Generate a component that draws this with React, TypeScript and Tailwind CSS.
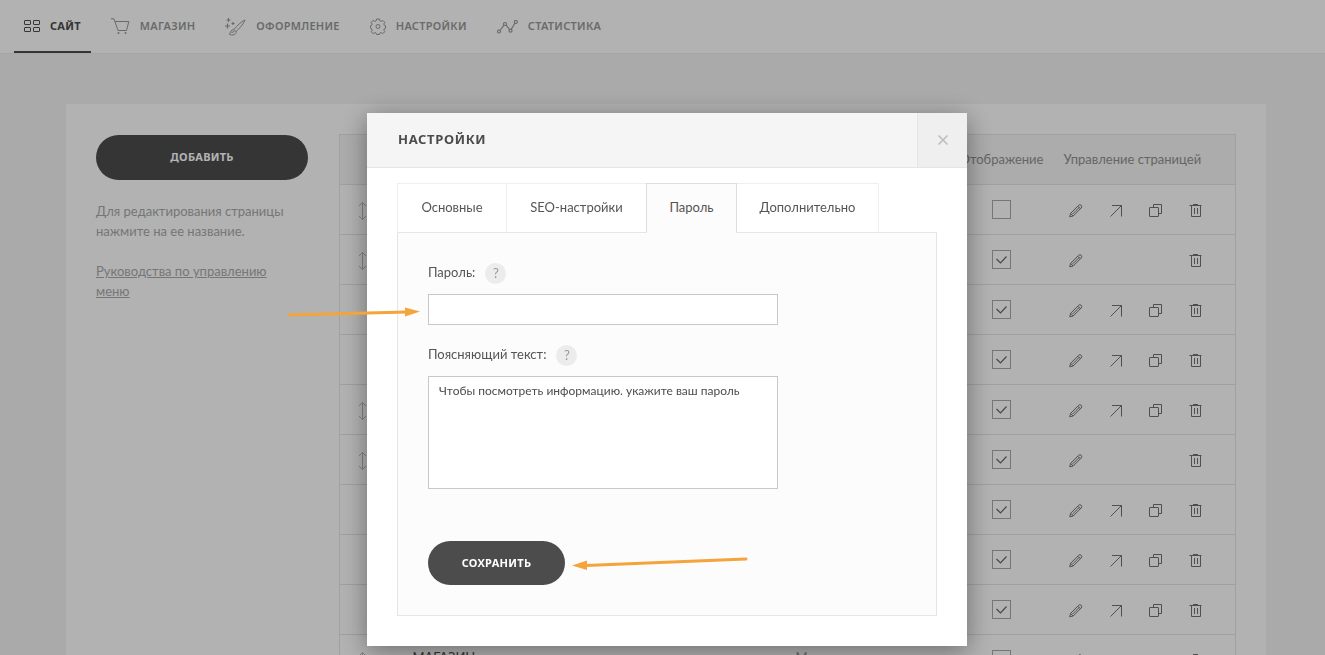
import type { ReactNode } from "react";

type Row = {
  name: string;
  template: string;
  visible: boolean;
  draggable: boolean;
  full: boolean;
};

const navItems: { label: string; icon: ReactNode; active?: boolean }[] = [
  { label: "САЙТ", icon: <GridIcon />, active: true },
  { label: "МАГАЗИН", icon: <CartIcon /> },
  { label: "ОФОРМЛЕНИЕ", icon: <BrushIcon /> },
  { label: "НАСТРОЙКИ", icon: <GearIcon /> },
  { label: "СТАТИСТИКА", icon: <ChartIcon /> },
];

const rows: Row[] = [
  { name: "", template: "", visible: false, draggable: true, full: true },
  { name: "", template: "", visible: true, draggable: true, full: false },
  { name: "", template: "", visible: true, draggable: false, full: true },
  { name: "", template: "", visible: true, draggable: false, full: true },
  { name: "", template: "", visible: true, draggable: true, full: true },
  { name: "", template: "", visible: true, draggable: true, full: false },
  { name: "", template: "", visible: true, draggable: false, full: true },
  { name: "", template: "", visible: true, draggable: false, full: true },
  { name: "", template: "", visible: true, draggable: false, full: true },
  { name: "МАГАЗИН", template: "М", visible: true, draggable: true, full: false },
];

const tabs = [
  { label: "Основные", width: "w-[109px]" },
  { label: "SEO-настройки", width: "w-[140px]" },
  { label: "Пароль", width: "w-[91px]", active: true },
  { label: "Дополнительно", width: "w-[142px]" },
];

function GridIcon() {
  return (
    <svg width="16" height="13" viewBox="0 0 16 13" fill="none" stroke="currentColor">
      <rect x="0.5" y="0.5" width="6" height="4" rx="0.5" />
      <rect x="9.5" y="0.5" width="6" height="4" rx="0.5" />
      <rect x="0.5" y="7.5" width="6" height="4" rx="0.5" />
      <rect x="9.5" y="7.5" width="6" height="4" rx="0.5" />
    </svg>
  );
}

function CartIcon() {
  return (
    <svg width="19" height="17" viewBox="0 0 19 17" fill="none" stroke="currentColor">
      <path d="M0 .8h3l4 11.7h8.5L17.8 3.5H4" />
      <circle cx="7.5" cy="15" r="1" fill="currentColor" stroke="none" />
      <circle cx="14.5" cy="15" r="1" fill="currentColor" stroke="none" />
    </svg>
  );
}

function BrushIcon() {
  return (
    <svg width="21" height="18" viewBox="0 0 21 18" fill="none" stroke="currentColor">
      <path d="M20 2C16.500 3.500 11.500 8 9 11.500L11 13.500C14.500 10.500 18.500 6 20 2Z" />
      <path d="M9 11.500C6 11.500 5.500 14 4.500 16.500C7.500 17.500 11.500 17 11 13.500M6.500 14.500l3-1" />
      <path d="M3.500 0v4M1.500 2h4M2.500 5.500v5M0 8h5M8 4v3M6.500 5.500h3" strokeWidth="1.200" />
    </svg>
  );
}

function GearIcon() {
  return (
    <svg width="16" height="17" viewBox="0 0 16 17" fill="none" stroke="currentColor" strokeLinejoin="round">
      <path d="M6.600 1h2.800l.5 1.900 1.300.5 1.700-1 1.900 1.900-1 1.700.5 1.300 1.200.4v2.600l-1.200.4-.5 1.300 1 1.700-1.900 1.900-1.700-1-1.300.5-.5 1.400H6.600l-.5-1.400-1.300-.5-1.700 1-1.900-1.900 1-1.700-.5-1.300-1.200-.4V7.700l1.200-.4.5-1.300-1-1.700 1.900-1.900 1.700 1 1.300-.5z" />
      <circle cx="8" cy="8.500" r="2" />
    </svg>
  );
}

function ChartIcon() {
  return (
    <svg width="21" height="14" viewBox="0 0 21 14" fill="none" stroke="currentColor" strokeWidth="1.200">
      <path d="M3 10.500 7 5.200M9.200 5.200 12.500 9.500M14.300 9.300 18 3" />
      <circle cx="2" cy="11.500" r="1.500" />
      <circle cx="8" cy="4" r="1.500" />
      <circle cx="13.500" cy="10.700" r="1.500" />
      <circle cx="18.800" cy="2" r="1.500" />
    </svg>
  );
}

function DragIcon() {
  return (
    <svg width="9" height="18" viewBox="0 0 9 18" fill="none" stroke="currentColor">
      <path d="M4.500 .5v17M1 4l3.500-3.500L8 4M1 14l3.500 3.500L8 14" />
    </svg>
  );
}

function PencilIcon() {
  return (
    <svg width="14" height="14" viewBox="0 0 14 14" fill="none" stroke="currentColor">
      <path d="M.7 12.800 1.600 9.300 9.600 1.300Q11 .1 12.200 1.300T12.200 4L4.200 12ZM1.600 9.300l2.600 2.700M3.400 10.200l7-7M8.800 2.200l2.600 2.600" />
    </svg>
  );
}

function ArrowIcon() {
  return (
    <svg width="14" height="13" viewBox="0 0 14 13" fill="none" stroke="currentColor">
      <path d="M3 1.500h9.500v11M1.500 12.500 12.500 1.500" />
    </svg>
  );
}

function CopyIcon() {
  return (
    <svg width="13" height="13" viewBox="0 0 13 13" fill="none" stroke="currentColor">
      <path d="M4.500 3.500v-3h8v9h-3" />
      <rect x="0.500" y="3.500" width="9" height="9" rx="0.500" />
    </svg>
  );
}

function TrashIcon() {
  return (
    <svg width="13" height="13" viewBox="0 0 13 13" fill="none" stroke="currentColor">
      <path d="M.5 1.500h12M4 .5h5M2.500 1.500v11h9v-11M5.500 4v6M8.500 4v6" />
    </svg>
  );
}

function Header() {
  return (
    <header className="border-b border-[#ececec] bg-white pl-[14px]">
      <nav className="flex h-[53px] gap-[10px] font-['Noto_Sans',sans-serif]">
        {navItems.map((item) => (
          <a
            key={item.label}
            href="#"
            className={`flex items-center gap-[10px] px-[10px] text-[11px] tracking-wide ${
              item.active
                ? "border-b-2 border-[#4c4c4c] pt-[2px] font-bold text-[#4c4c4c]"
                : "font-semibold text-[#999]"
            }`}
          >
            {item.icon}
            {item.label}
          </a>
        ))}
      </nav>
    </header>
  );
}

function Sidebar() {
  return (
    <aside className="w-[212px] shrink-0 pt-px">
      <button className="h-[45px] w-full rounded-full bg-[#4c4c4c] font-['Noto_Sans',sans-serif] text-[11px] font-bold tracking-wide text-white">
        ДОБАВИТЬ
      </button>
      <div className="mt-[21px] pr-4 text-[13px] leading-5 text-[#aaa]">
        <p>Для редактирования страницы нажмите на ее название.</p>
        <a href="#" className="mt-5 block underline">
          Руководства по управлению меню
        </a>
      </div>
    </aside>
  );
}

function PagesTable() {
  return (
    <table className="w-full table-fixed border-collapse border border-[#e5e5e5] text-[13px]">
      <colgroup>
        <col className="w-[45px]" />
        <col />
        <col className="w-[180px]" />
        <col className="w-[108px]" />
        <col className="w-[180px]" />
      </colgroup>
      <thead>
        <tr className="h-[50px] border-b border-[#e5e5e5] bg-[#f7f7f7] text-[#919191]">
          <th />
          <th />
          <th />
          <th className="font-normal">Отображение</th>
          <th className="pl-2 text-left font-normal">Управление страницей</th>
        </tr>
      </thead>
      <tbody>
        {rows.map((row, i) => (
          <tr key={i} className="h-[50px] border-b border-[#e5e5e5]">
            <td className="pt-0.5 pl-[18px] text-[#bbb]">{row.draggable && <DragIcon />}</td>
            <td className="pb-1 pl-7 text-[#4c4c4c]">{row.name}</td>
            <td className="pb-1 pl-7 text-[#999]">{row.template}</td>
            <td>
              <label className="relative mx-auto block size-[19px]">
                <input
                  type="checkbox"
                  aria-label="Отображение"
                  defaultChecked={row.visible}
                  className="peer block size-[19px] appearance-none border border-[#aaa]"
                />
                <svg
                  className="absolute inset-0 hidden text-[#666] peer-checked:block"
                  width="19"
                  height="19"
                  viewBox="0 0 19 19"
                  fill="none"
                  stroke="currentColor"
                  strokeWidth="1.200"
                >
                  <path d="M4.500 9 8.500 13 14.500 6.500" />
                </svg>
              </label>
            </td>
            <td className="pt-0.5 pl-[13px] text-[#727272]">
              <div className="grid w-[160px] grid-cols-4">
                <button aria-label="Редактировать"><PencilIcon /></button>
                {row.full ? <button aria-label="Открыть"><ArrowIcon /></button> : <span />}
                {row.full ? <button aria-label="Копировать"><CopyIcon /></button> : <span />}
                <button aria-label="Удалить"><TrashIcon /></button>
              </div>
            </td>
          </tr>
        ))}
      </tbody>
    </table>
  );
}

function FieldLabel({ htmlFor, text }: { htmlFor: string; text: string }) {
  return (
    <div className="flex gap-[10px]">
      <label htmlFor={htmlFor} className="leading-[18px]">{text}</label>
      <button aria-label="Подсказка" className="size-[21px] rounded-full bg-[#ececec] text-[13px] text-[#999]">
        ?
      </button>
    </div>
  );
}

function SettingsDialog() {
  return (
    <div
      role="dialog"
      aria-label="Настройки"
      className="relative w-[600px] bg-white text-[13px] text-[#555] shadow-[0_5px_25px_rgba(0,0,0,0.4)]"
    >
      <div className="flex h-[55px] items-stretch justify-between border-b border-[#e5e5e5] bg-[#f5f5f5]">
        <h2 className="flex items-center pl-[31px] font-['Noto_Sans',sans-serif] text-[13px] font-bold tracking-wider text-[#4c4c4c]">
          НАСТРОЙКИ
        </h2>
        <button
          aria-label="Закрыть"
          className="flex w-[50px] items-center justify-center border-l border-[#e5e5e5] bg-[#efefef] text-[#bbb]"
        >
          <svg width="10" height="10" viewBox="0 0 10 10" fill="none" stroke="currentColor" strokeWidth="1.500">
            <path d="M.5 .5l9 9M9.500 .5l-9 9" />
          </svg>
        </button>
      </div>

      <div className="px-[30px] pt-[15px] pb-[30px]">
        <div role="tablist" className="flex">
          {tabs.map((tab, i) => (
            <button
              key={tab.label}
              role="tab"
              aria-selected={!!tab.active}
              className={`h-[50px] ${tab.width} ${
                tab.active
                  ? "relative border border-[#ddd] border-b-[#fcfcfc] bg-[#fcfcfc]"
                  : `border-y border-t-[#efefef] border-b-[#e5e5e5] ${
                      i === 3 ? "border-r border-r-[#efefef]" : "border-l border-l-[#efefef]"
                    }`
              }`}
            >
              {tab.label}
            </button>
          ))}
        </div>

        <form className="-mt-px border border-[#e5e5e5] bg-[#fcfcfc] p-[30px]">
          <FieldLabel htmlFor="password" text="Пароль:" />
          <input
            id="password"
            type="text"
            className="mt-[10px] block h-[31px] w-[350px] border border-[#c8c8c8] bg-white px-[10px]"
          />
          <div className="mt-5">
            <FieldLabel htmlFor="hint" text="Поясняющий текст:" />
          </div>
          <textarea
            id="hint"
            defaultValue="Чтобы посмотреть информацию. укажите ваш пароль"
            className="mt-[10px] block h-[113px] w-[350px] resize-none border border-[#c8c8c8] bg-white px-[10px] py-[5px] text-[12px] leading-[18px] text-[#4c4c4c]"
          />
          <button
            type="button"
            className="mt-[52px] block h-11 w-[137px] rounded-full bg-[#4c4c4c] font-['Noto_Sans',sans-serif] text-[11px] font-bold tracking-wide text-white"
          >
            СОХРАНИТЬ
          </button>
        </form>
      </div>

      {/* pointers to the password field and the save button */}
      <svg
        className="pointer-events-none absolute top-[190px] -left-[80px] text-[#f5a33b]"
        width="134"
        height="20"
        fill="currentColor"
      >
        <path d="M2 12 120 9" stroke="currentColor" strokeWidth="3" strokeLinecap="round" />
        <path d="M118 4.500 133 8.500 118 13.500Z" />
      </svg>
      <svg
        className="pointer-events-none absolute top-[440px] left-[205px] text-[#f5a33b]"
        width="176"
        height="20"
        fill="currentColor"
      >
        <path d="M14 12.500 174 6" stroke="currentColor" strokeWidth="3" strokeLinecap="round" />
        <path d="M15 7.500 0 12.500 15 17Z" />
      </svg>
    </div>
  );
}

export default function App() {
  return (
    <div className="h-screen overflow-hidden bg-[#f4f4f4] font-['Lato','Noto_Sans',sans-serif]">
      <Header />
      <main className="mt-[50px] mr-[59px] ml-[66px] flex gap-[31px] bg-white p-[30px]">
        <Sidebar />
        <PagesTable />
      </main>
      <div className="fixed inset-0 flex items-start justify-center bg-black/30 pt-[113px] pl-[9px]">
        <SettingsDialog />
      </div>
    </div>
  );
}
